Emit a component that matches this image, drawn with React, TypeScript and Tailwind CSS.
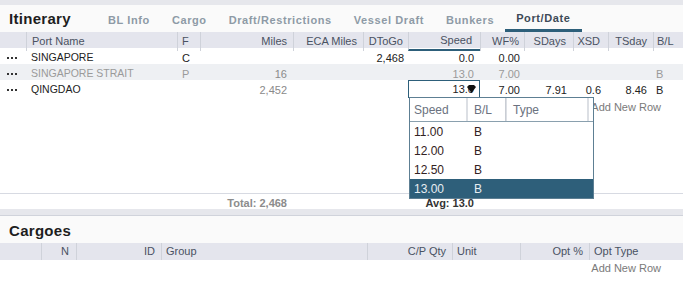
const itinCols =
  'grid grid-cols-[26px_151px_23px_93px_70px_45px_72px_44px_49px_35px_45px_30px]';
const cargoCols = 'grid grid-cols-[41px_35px_85px_206px_85px_68px_69px_94px]';

function Dots() {
  return (
    <div className="flex items-center gap-[2px] pl-[7px]">
      <span className="h-[2px] w-[2px] bg-[#333]" />
      <span className="h-[2px] w-[2px] bg-[#333]" />
      <span className="h-[2px] w-[2px] bg-[#333]" />
    </div>
  );
}

function Tab({ label, active }: { label: string; active?: boolean }) {
  return (
    <div
      className={`flex h-full items-center px-[11px] pt-[3px] text-[11px] font-bold tracking-[0.6px] ${
        active ? 'border-b-[3px] border-[#2d5f7a] text-[#3d4a57]' : 'text-[#8e9aa6]'
      }`}
    >
      {label}
    </div>
  );
}

type Row = {
  port: string;
  f: string;
  miles: string;
  dtogo: string;
  speed: string;
  wf: string;
  sdays: string;
  xsd: string;
  tsday: string;
  bl: string;
  muted?: boolean;
  editing?: boolean;
};

const rows: Row[] = [
  { port: 'SINGAPORE', f: 'C', miles: '', dtogo: '2,468', speed: '0.0', wf: '0.00', sdays: '', xsd: '', tsday: '', bl: '' },
  { port: 'SINGAPORE STRAIT', f: 'P', miles: '16', dtogo: '', speed: '13.0', wf: '7.00', sdays: '', xsd: '', tsday: '', bl: 'B', muted: true },
  { port: 'QINGDAO', f: '', miles: '2,452', dtogo: '', speed: '13.0', wf: '7.00', sdays: '7.91', xsd: '0.6', tsday: '8.46', bl: 'B', editing: true },
];

const speeds = ['11.00', '12.00', '12.50', '13.00'];

export default function App() {
  const hd = 'flex items-center border-l border-[#cfd2da]';
  return (
    <div className="h-[300px] w-[683px] overflow-hidden bg-white font-['Liberation_Sans',Arial,sans-serif] text-[11px] text-[#222]">
      <div className="h-[5px] bg-[#e6e7ec]" />
      <div className="relative">
        <div className="flex h-[27px] items-center bg-[#fafafa]">
          <div className="w-[97px] pl-[9px] pt-[2px] text-[15px] font-bold tracking-[0.3px] text-[#1e1e1e]">Itinerary</div>
          <div className="flex h-full items-center">
            <Tab label="BL Info" />
            <Tab label="Cargo" />
            <Tab label="Draft/Restrictions" />
            <Tab label="Vessel Draft" />
            <Tab label="Bunkers" />
            <Tab label="Port/Date" active />
          </div>
        </div>

        <div className={`${itinCols} h-[16px] bg-[#e4e5ed] text-[#4a5262]`}>
          <div />
          <div className={`${hd} pl-[5px]`}>Port Name</div>
          <div className={`${hd} pl-[4px]`}>F</div>
          <div className={`${hd} justify-end pr-[6px]`}>Miles</div>
          <div className={`${hd} justify-end pr-[6px]`}>ECA Miles</div>
          <div className={`${hd} justify-end pr-[5px]`}>DToGo</div>
          <div className={`${hd} justify-end border-b-2 border-b-[#2d5f7a] pr-[8px]`}>Speed</div>
          <div className={`${hd} justify-end pr-[5px]`}>WF%</div>
          <div className={`${hd} justify-end pr-[7px]`}>SDays</div>
          <div className={`${hd} justify-end pr-[8px]`}>XSD</div>
          <div className={`${hd} justify-end pr-[6px]`}>TSday</div>
          <div className={`${hd} pl-[3px]`}>B/L</div>
        </div>

        {rows.map((r) => (
          <div
            key={r.port}
            className={`${itinCols} pt-[2px] ${r.editing ? 'h-[17px]' : 'h-[16px]'} ${
              r.muted ? 'bg-[#eef0f3] text-[#9a9a9a]' : 'text-[#222]'
            }`}
          >
            <Dots />
            <div className="flex items-center pl-[5px] text-[10.5px]">{r.port}</div>
            <div className="flex items-center pl-[5px]">{r.f}</div>
            <div className="flex items-center justify-end pr-[6px] text-[#8a8a8a]">{r.miles}</div>
            <div />
            <div className="flex items-center justify-end pr-[4px]">{r.dtogo}</div>
            {r.editing ? (
              <div className="relative -mt-[2px] flex h-[18px] items-center justify-end border border-[#2d5f7a] bg-white pr-[5px]">
                13.0
                <svg className="absolute right-[3px] top-[4px]" width="9" height="8" viewBox="0 0 9 8">
                  <path d="M0 2 L2 0 L7 0 L9 2 L4.5 8 Z" fill="#111" />
                </svg>
              </div>
            ) : (
              <div className="flex items-center justify-end pr-[6px]">{r.speed}</div>
            )}
            <div className="flex items-center justify-end pr-[4px]">{r.wf}</div>
            <div className="flex items-center justify-end pr-[6px]">{r.sdays}</div>
            <div className="flex items-center justify-end pr-[7px]">{r.xsd}</div>
            <div className="flex items-center justify-end pr-[6px]">{r.tsday}</div>
            <div className="flex items-center pl-[3px]">{r.bl}</div>
          </div>
        ))}

        <div className="flex h-[17px] items-center justify-end pr-[22px] pt-[3px] text-[#7a7a7a]">Add New Row</div>
        <div className="h-[79px]" />

        <div className={`${itinCols} h-[16px] border-t border-[#d7dae2] pt-[1px] font-bold`}>
          <div />
          <div />
          <div />
          <div className="flex items-center justify-end pr-[6px] text-[#8c8c8c]">Total: 2,468</div>
          <div />
          <div />
          <div className="flex items-center justify-end pr-[6px] text-[#333]">Avg: 13.0</div>
        </div>

        <div className="absolute left-[409px] top-[92px] w-[185px] border border-[#5d7f93] bg-white text-[12px]">
          <div className="grid h-[24px] grid-cols-[58px_38px_83px_4px] border-b border-[#8aa0ae] text-[#6b7280]">
            <div className="flex items-center border-r-2 border-[#dcdfe4] pl-[4px]">Speed</div>
            <div className="flex items-center border-r border-[#c9cdd4] pl-[6px]">B/L</div>
            <div className="flex items-center border-l border-r-2 border-[#dcdfe4] pl-[6px]">Type</div>
            <div />
          </div>
          {speeds.map((s, i) => (
            <div
              key={s}
              className={`grid h-[19px] grid-cols-[58px_38px_1fr] items-center ${
                i === speeds.length - 1 ? 'bg-[#2e5f7a] text-[#e6edf2]' : 'text-[#332222]'
              }`}
            >
              <div className="pl-[4px]">{s}</div>
              <div className="pl-[6px]">B</div>
              <div />
            </div>
          ))}
        </div>
      </div>

      <div className="h-[7px] border-b border-[#d0d3db] bg-[#e6e7ec]" />
      <div className="flex h-[27px] items-center bg-[#fafafa] pl-[9px] pt-[3px] text-[15px] font-bold tracking-[0.3px] text-[#1e1e1e]">
        Cargoes
      </div>
      <div className={`${cargoCols} h-[17px] bg-[#e4e5ed] text-[#4a5262]`}>
        <div />
        <div className={`${hd} justify-end pr-[7px]`}>N</div>
        <div className={`${hd} justify-end pr-[6px]`}>ID</div>
        <div className={`${hd} pl-[4px]`}>Group</div>
        <div className={`${hd} justify-end pr-[6px]`}>C/P Qty</div>
        <div className={`${hd} pl-[4px]`}>Unit</div>
        <div className={`${hd} justify-end pr-[6px]`}>Opt %</div>
        <div className={`${hd} pl-[4px]`}>Opt Type</div>
      </div>
      <div className="flex h-[17px] items-center justify-end pr-[22px] text-[#7a7a7a]">Add New Row</div>
    </div>
  );
}
